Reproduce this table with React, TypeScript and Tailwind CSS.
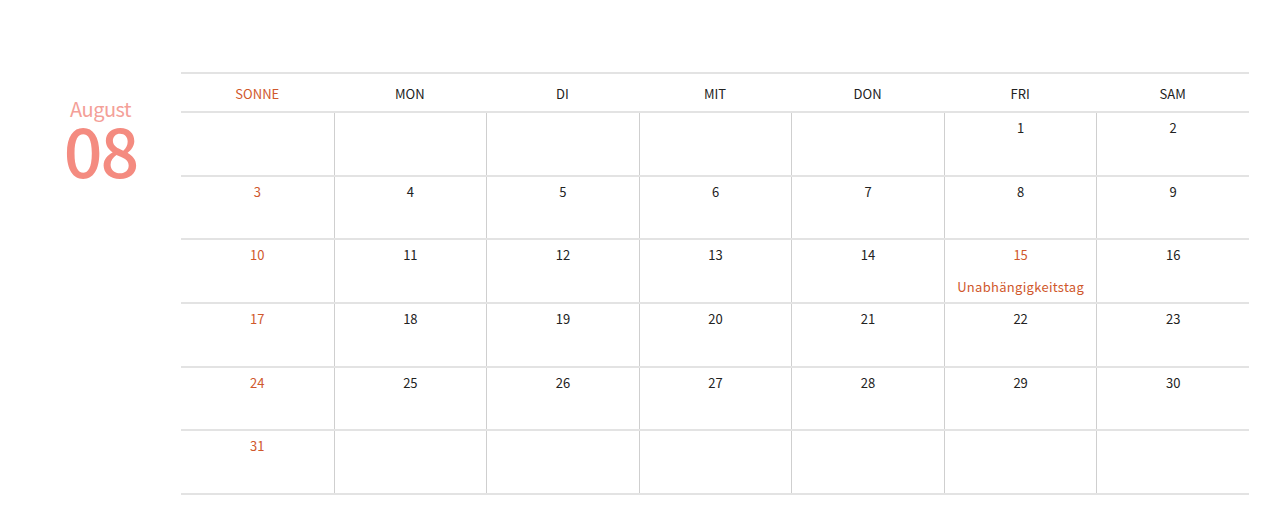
const days = ["SONNE", "MON", "DI", "MIT", "DON", "FRI", "SAM"];

type Cell = { day?: number; note?: string };

const cells: Cell[] = [
  ...Array.from({ length: 5 }, () => ({})),
  ...Array.from({ length: 31 }, (_, i) => ({
    day: i + 1,
    note: i + 1 === 15 ? "Unabhängigkeitstag" : undefined,
  })),
];
while (cells.length < 42) cells.push({});

const weeks = Array.from({ length: 6 }, (_, w) => cells.slice(w * 7, w * 7 + 7));

export default function App() {
  return (
    <div
      className="h-[522px] w-[1280px] bg-white"
      style={{ fontFamily: '"Noto Sans CJK JP", "Noto Sans", sans-serif' }}
    >
      <div className="flex pt-[72px]">
        <div className="flex w-[181px] flex-col items-center pt-[25px]">
          <div className="mr-[-20px] flex flex-col items-center">
            <div className="text-[20px] leading-[24px] tracking-[-0.5px] text-[#f4a098]">August</div>
            <div className="mt-[2px] text-[68px] font-medium leading-[52px] tracking-[-2px] text-[#f48b80]">08</div>
          </div>
        </div>

        <div className="w-[1068px]">
          <div className="grid h-[41px] grid-cols-7 border-y-2 border-[#e3e3e3] text-[13px]">
            {days.map((d, i) => (
              <div
                key={d}
                className={`flex items-center justify-center pt-[3px] ${i === 0 ? "text-[#d0582c]" : "text-[#222]"}`}
              >
                {d}
              </div>
            ))}
          </div>

          {weeks.map((week, w) => (
            <div key={w} className="grid h-[63.7px] grid-cols-7 border-b-2 border-[#e3e3e3]">
              {week.map((c, i) => (
                <div
                  key={i}
                  className={`flex flex-col items-center pt-[4px] text-[13px] leading-[22px] ${
                    i > 0 ? "border-l border-[#cfcfcf]" : ""
                  } ${i === 0 ? "text-[#d0582c]" : "text-[#222]"}`}
                >
                  {c.day ? (
                    <span className={c.note ? "text-[#d0582c]" : ""}>{c.day}</span>
                  ) : null}
                  {c.note ? (
                    <span className="mt-[10px] text-[13px] tracking-[0.3px] text-[#d0582c]">{c.note}</span>
                  ) : null}
                </div>
              ))}
            </div>
          ))}
        </div>
      </div>
    </div>
  );
}
